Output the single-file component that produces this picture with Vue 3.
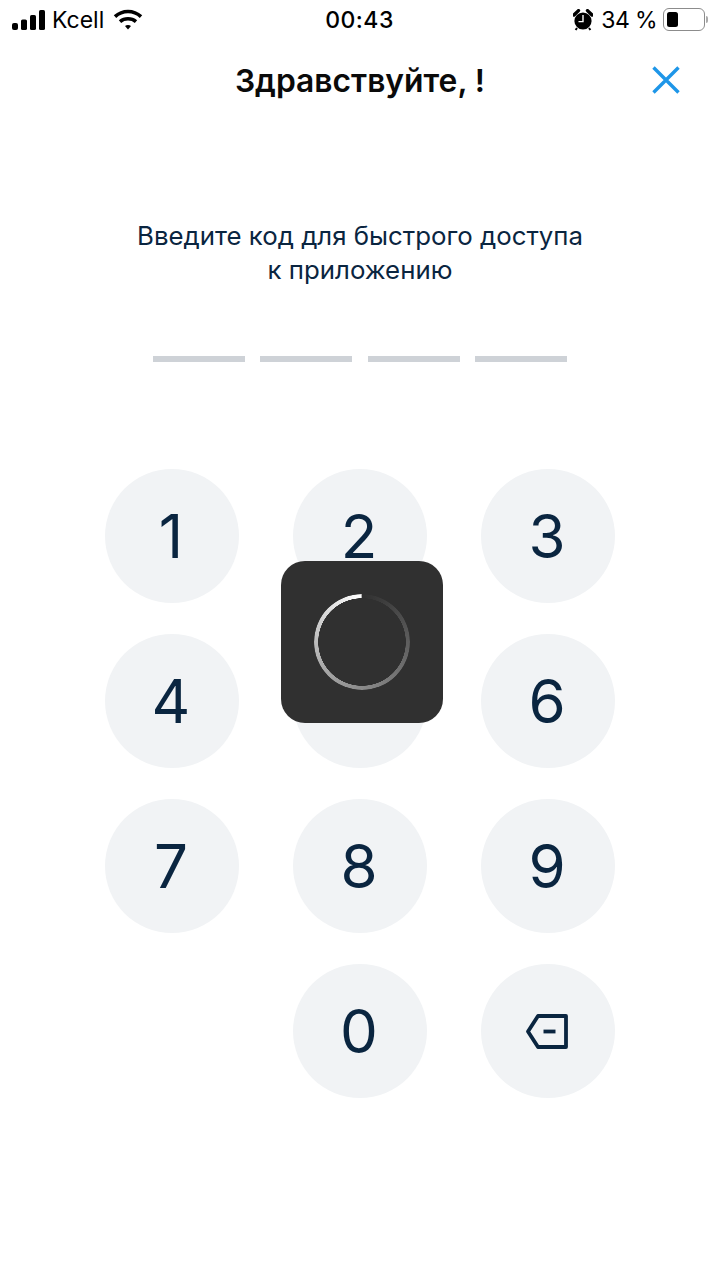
<script setup>
const keys = ['1', '2', '3', '4', '5', '6', '7', '8', '9', '', '0', 'back']
</script>

<template>
  <div class="screen">
    <div class="status">
      <div class="side left">
        <svg class="signal" width="34" height="20" viewBox="0 0 34 20" fill="#000">
          <rect x="0" y="13" width="6" height="7" rx="2" />
          <rect x="9" y="9.5" width="6" height="10.5" rx="1.6" />
          <rect x="18" y="5" width="6" height="15" rx="1.6" />
          <rect x="27" y="0" width="6" height="20" rx="1.6" />
        </svg>
        <span class="carrier">Kcell</span>
        <svg class="wifi" width="30" height="22" viewBox="0 0 30 22" fill="none" stroke="#000" stroke-width="3.6">
          <path d="M2 7.6 C9.5 0.8 20.5 0.8 28 7.6" />
          <path d="M7 12.6 C11.5 8.8 18.5 8.8 23 12.6" />
          <path d="M12 17 L15 20.4 L18 17 C16.4 15.6 13.6 15.6 12 17 Z" fill="#000" stroke="none" />
        </svg>
      </div>
      <span class="time">00:43</span>
      <div class="side right">
        <svg class="alarm" width="20" height="22" viewBox="0 0 20 22">
          <circle cx="10" cy="12" r="8.6" fill="#000" />
          <path d="M1 6 L5.5 1.6 M19 6 L14.5 1.6" stroke="#000" stroke-width="3.4" stroke-linecap="round" />
          <path d="M10 6 V12.6 H5.5" stroke="#fff" stroke-width="1.4" fill="none" />
          <path d="M4 19 L2.6 21 M16 19 L17.4 21" stroke="#000" stroke-width="2" />
        </svg>
        <span class="percent">34 %</span>
        <div class="battery"><div class="level"></div></div>
        <div class="nub"></div>
      </div>
    </div>

    <header class="header">
      <h1 class="title">Здравствуйте, !</h1>
      <svg class="close" width="28" height="28" viewBox="0 0 28 28" fill="none" stroke="#1e96e8" stroke-width="3.4">
        <path d="M1.5 1.5 L26.5 26.5 M26.5 1.5 L1.5 26.5" />
      </svg>
    </header>

    <p class="prompt">Введите код для быстрого доступа<br />к приложению</p>

    <div class="code">
      <span v-for="n in 4" :key="n" class="dash"></span>
    </div>

    <div class="pad">
      <template v-for="key in keys" :key="key">
        <div v-if="key === ''" class="blank"></div>
        <div v-else class="key">
          <svg v-if="key === 'back'" class="back" width="42" height="35" viewBox="0 0 42 35" fill="none" stroke="#0a2540" stroke-width="3.8" stroke-linejoin="round">
            <path d="M12 2 H40 V33 H12 L2 17.5 Z" />
            <path d="M17.5 17.5 H29.5" />
          </svg>
          <span v-else class="digit">{{ key }}</span>
        </div>
      </template>
    </div>

    <div class="hud">
      <div class="spinner"></div>
    </div>
  </div>
</template>

<style scoped>
.screen {
  position: relative;
  width: 720px;
  height: 1280px;
  background: #fff;
  font-family: Inter, "Noto Sans", sans-serif;
  overflow: hidden;
}
.status {
  height: 39px;
  padding: 0 12px;
  display: grid;
  grid-template-columns: 1fr auto 1fr;
  align-items: center;
  color: #000;
  font-size: 23px;
}
.side {
  display: flex;
  align-items: center;
}
.right {
  justify-content: flex-end;
}
.carrier {
  margin-left: 6px;
}
.wifi {
  margin-left: 9px;
}
.time {
  font-weight: 500;
  letter-spacing: 0.5px;
  margin-left: -1px;
}
.percent {
  margin-left: 8px;
  letter-spacing: -0.6px;
}
.battery {
  width: 42px;
  height: 23px;
  margin-left: 6px;
  padding: 3px;
  border: 1.5px solid #8c8c8c;
  border-radius: 6px;
  box-sizing: border-box;
}
.level {
  width: 11px;
  height: 100%;
  background: #000;
  border-radius: 2.5px;
}
.nub {
  width: 2px;
  height: 7px;
  margin-left: 1px;
  background: #aaa;
  border-radius: 0 2px 2px 0;
}
.header {
  position: relative;
  height: 82px;
  display: flex;
  align-items: center;
  justify-content: center;
}
.title {
  margin: 0;
  font-size: 31.8px;
  font-weight: 600;
  color: #0a0a0a;
}
.close {
  position: absolute;
  right: 40px;
  top: 27px;
}
.prompt {
  margin: 98px 0 0;
  font-size: 25.8px;
  line-height: 34px;
  text-align: center;
  color: #0a2540;
}
.code {
  margin-top: 69px;
  display: flex;
  justify-content: center;
  gap: 15.5px;
}
.dash {
  width: 92px;
  height: 6px;
  background: #ced2d7;
}
.pad {
  margin-top: 107px;
  display: grid;
  grid-template-columns: repeat(3, 134px);
  column-gap: 54px;
  row-gap: 31px;
  justify-content: center;
}
.key {
  width: 134px;
  height: 134px;
  border-radius: 50%;
  background: #f1f3f5;
  display: flex;
  align-items: center;
  justify-content: center;
  color: #0a2540;
  font-size: 60px;
}
.digit {
  margin-left: -2px;
}
.back {
  margin-right: 3px;
}
.hud {
  position: absolute;
  left: 281px;
  top: 561px;
  width: 162px;
  height: 162px;
  border-radius: 24px;
  background: #303030;
  display: flex;
  align-items: center;
  justify-content: center;
}
.spinner {
  position: relative;
  width: 96px;
  height: 96px;
  border-radius: 50%;
  background: conic-gradient(from 0deg, #303030 0deg, #3c3c3c 25deg, #5e5e5e 90deg, #8a8a8a 180deg, #bcbcbc 270deg, #ffffff 359deg, #303030 360deg);
  -webkit-mask: radial-gradient(circle, transparent 43.6px, #000 44px);
  mask: radial-gradient(circle, transparent 43.6px, #000 44px);
}
</style>
